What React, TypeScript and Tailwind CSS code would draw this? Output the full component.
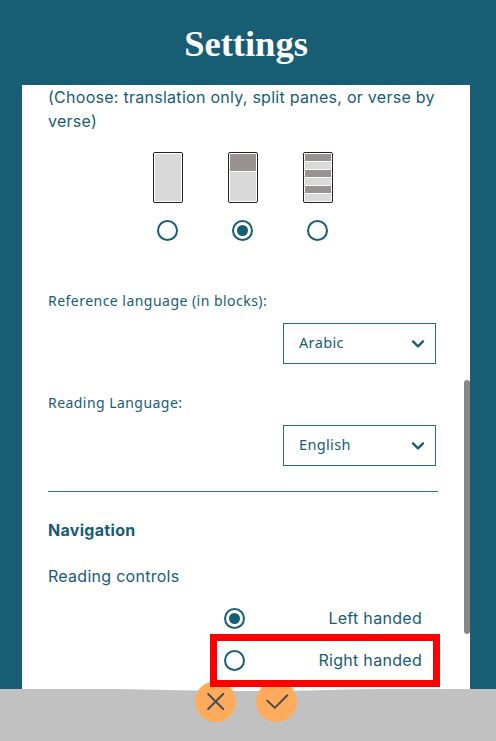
import React from 'react';

const inter = "font-['Inter','Liberation_Sans',sans-serif]";
const label = "font-['Noto_Sans','Open_Sans',sans-serif]";

function Radio({ checked = false }: { checked?: boolean }) {
  return (
    <span
      role="radio"
      aria-checked={checked}
      className="flex h-[21px] w-[21px] shrink-0 items-center justify-center rounded-full border-2 border-[#175d74] bg-white"
    >
      {checked && <span className="h-[11px] w-[11px] rounded-full bg-[#175d74]" />}
    </span>
  );
}

function LayoutOption({ bands, checked = false }: { bands: string[]; checked?: boolean }) {
  return (
    <div className="flex w-[30px] flex-col items-start">
      <div className="flex h-[51px] w-[30px] flex-col gap-px rounded-[2px] border border-[#222] bg-white p-px">
        {bands.map((band, i) => (
          <div key={i} className={band} />
        ))}
      </div>
      <div className="mt-[17px] ml-[4px]">
        <Radio checked={checked} />
      </div>
    </div>
  );
}

function LanguageSelect({ value }: { value: string }) {
  return (
    <div className={`ml-[235px] flex h-[41px] w-[153px] items-center justify-between border border-[#2a6b80] pr-[9px] pl-[15px] ${label}`}>
      <span className="-mt-[2px] text-[14.5px] tracking-[0.35px]">{value}</span>
      <svg width="16" height="16" viewBox="0 0 16 16" fill="none" stroke="#175d74" strokeWidth="2.3" strokeLinecap="round" strokeLinejoin="round">
        <path d="M3 5.4 8 10.4l5-5" />
      </svg>
    </div>
  );
}

const dark = 'bg-[#999292]';
const light = 'bg-[#d9d9d9]';

export default function App() {
  return (
    <div className="relative flex h-[741px] w-[496px] flex-col overflow-hidden bg-[#175d74] text-[#175d74]">
      <header className="flex h-[85px] shrink-0 items-center justify-center pt-[3px] pr-[4px]">
        <h1 className="font-['Liberation_Serif',serif] text-[36.5px] leading-[40px] font-bold text-white">Settings</h1>
      </header>

      <main className={`ml-[22px] flex h-[604px] w-[448px] shrink-0 bg-white ${inter}`}>
        <div className="w-[442px] pl-[26px]">
          <p className="w-[400px] text-[16px] leading-6 tracking-[0.27px]">
            (Choose: translation only, split panes, or verse by
            <br />
            verse)
          </p>

          <div className="mt-[19px] ml-[105px] flex gap-[45px]">
            <LayoutOption bands={[`flex-1 ${light}`]} />
            <LayoutOption checked bands={[`h-[17px] ${dark}`, `flex-1 ${light}`]} />
            <LayoutOption
              bands={[
                `flex-1 ${dark}`,
                `flex-1 ${light}`,
                `flex-1 ${dark}`,
                `flex-1 ${light}`,
                `flex-1 ${dark}`,
                `flex-1 ${light}`,
              ]}
            />
          </div>

          <div className={`mt-[50px] h-5 text-[14px] leading-5 tracking-[0.47px] ${label}`}>Reference language (in blocks):</div>
          <div className="mt-[12px]">
            <LanguageSelect value="Arabic" />
          </div>
          <div className={`mt-[29px] h-5 text-[14px] leading-5 tracking-[0.45px] ${label}`}>Reading Language:</div>
          <div className="mt-[12px]">
            <LanguageSelect value="English" />
          </div>

          <hr className="mt-[25px] w-[390px] border-t border-[#2a7086]" />

          <h2 className="mt-[26px] text-[16px] leading-6 font-bold tracking-[0.3px]">Navigation</h2>
          <p className="mt-[22px] text-[16px] leading-6 tracking-[0.27px]">Reading controls</p>

          <div className="mt-[18px] ml-[176px] flex w-[198px] flex-col gap-[18px]">
            <div className="flex h-6 items-center justify-between">
              <Radio checked />
              <span className="text-[16px] tracking-[0.3px]">Left handed</span>
            </div>
            <div className="flex h-6 items-center justify-between">
              <Radio />
              <span className="text-[16px] tracking-[0.3px]">Right handed</span>
            </div>
          </div>
        </div>
        <div className="mt-[295px] h-[254px] w-[6px] rounded-[3px] bg-[#888]" />
      </main>

      <footer className="relative h-[52px] shrink-0 bg-[#c1c1c1]">
        <svg className="absolute top-0 left-0" width="496" height="4" viewBox="0 0 496 4">
          <path d="M100 0C150 .2 180 2 247 2S330 .3 390 0Z" fill="#fff" />
        </svg>
        <div className="relative -top-[8px] ml-[195px] flex gap-[20px]">
          <button className="flex h-[41px] w-[41px] items-center justify-center rounded-full bg-[#ffab5e]" aria-label="Cancel">
            <svg width="20" height="20" viewBox="0 0 20 20" fill="none" stroke="#4d4d4d" strokeWidth="2" strokeLinecap="round">
              <path d="M2.2 2l15 15M17.2 2l-15 15" />
            </svg>
          </button>
          <button className="flex h-[41px] w-[41px] items-center justify-center rounded-full bg-[#ffab5e]" aria-label="Confirm">
            <svg width="24" height="20" viewBox="0 0 24 20" fill="none" stroke="#4d4d4d" strokeWidth="2" strokeLinecap="round" strokeLinejoin="round">
              <path d="M2.3 8.7l7.5 7.2L22.3 3.2" />
            </svg>
          </button>
        </div>
      </footer>

      <div className="absolute top-[634px] left-[210px] h-[53px] w-[230px] border-[7px] border-[#ff0000]" />
    </div>
  );
}
